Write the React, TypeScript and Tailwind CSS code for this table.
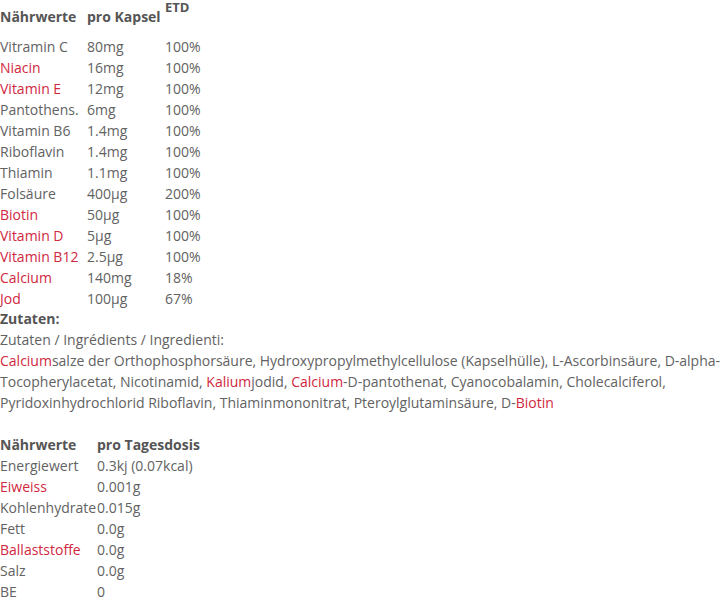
const red = 'text-[#d0283e]';

type Row = { name: string; amount: string; etd?: string; hl?: boolean };

const vitamine: Row[] = [
  { name: 'Vitramin C', amount: '80mg', etd: '100%' },
  { name: 'Niacin', amount: '16mg', etd: '100%', hl: true },
  { name: 'Vitamin E', amount: '12mg', etd: '100%', hl: true },
  { name: 'Pantothens.', amount: '6mg', etd: '100%' },
  { name: 'Vitamin B6', amount: '1.4mg', etd: '100%' },
  { name: 'Riboflavin', amount: '1.4mg', etd: '100%' },
  { name: 'Thiamin', amount: '1.1mg', etd: '100%' },
  { name: 'Folsäure', amount: '400µg', etd: '200%' },
  { name: 'Biotin', amount: '50µg', etd: '100%', hl: true },
  { name: 'Vitamin D', amount: '5µg', etd: '100%', hl: true },
  { name: 'Vitamin B12', amount: '2.5µg', etd: '100%', hl: true },
  { name: 'Calcium', amount: '140mg', etd: '18%', hl: true },
  { name: 'Jod', amount: '100µg', etd: '67%', hl: true },
];

const tagesdosis: Row[] = [
  { name: 'Energiewert', amount: '0.3kj (0.07kcal)' },
  { name: 'Eiweiss', amount: '0.001g', hl: true },
  { name: 'Kohlenhydrate', amount: '0.015g' },
  { name: 'Fett', amount: '0.0g' },
  { name: 'Ballaststoffe', amount: '0.0g', hl: true },
  { name: 'Salz', amount: '0.0g' },
  { name: 'BE', amount: '0' },
];

export default function App() {
  return (
    <div className="w-[720px] bg-white text-[14px] leading-[21px] text-[#626262] font-['Open_Sans',sans-serif]">
      {/* Vitamine pro Kapsel */}
      <div className="grid grid-cols-[87px_78px_1fr]">
        <div className="h-[36px] pt-[6px] font-bold text-[#555]">Nährwerte</div>
        <div className="h-[36px] pt-[6px] font-bold text-[#555]">pro Kapsel</div>
        <div className="h-[36px] text-[13px] leading-[14px] font-bold text-[#555]">ETD</div>
        {vitamine.map((r) => (
          <div key={r.name} className="contents">
            <div className={r.hl ? red : ''}>{r.name}</div>
            <div>{r.amount}</div>
            <div>{r.etd}</div>
          </div>
        ))}
      </div>

      <div className="-mt-px font-bold text-[#555]">Zutaten:</div>
      <p>Zutaten / Ingrédients / Ingredienti:</p>
      <p className="whitespace-nowrap">
        <span className={red}>Calcium</span>salze der Orthophosphorsäure, Hydroxypropylmethylcellulose (Kapselhülle), L-Ascorbinsäure, D-alpha-
        <br />
        Tocopherylacetat, Nicotinamid, <span className={red}>Kalium</span>jodid, <span className={red}>Calcium</span>-D-pantothenat, Cyanocobalamin, Cholecalciferol,
        <br />
        Pyridoxinhydrochlorid Riboflavin, Thiaminmononitrat, Pteroylglutaminsäure, D-<span className={red}>Biotin</span>
      </p>

      {/* Nährwerte pro Tagesdosis */}
      <div className="mt-[21px] grid grid-cols-[97px_1fr]">
        <div className="font-bold text-[#555]">Nährwerte</div>
        <div className="font-bold text-[#555]">pro Tagesdosis</div>
        {tagesdosis.map((r) => (
          <div key={r.name} className="contents">
            <div className={r.hl ? red : ''}>{r.name}</div>
            <div>{r.amount}</div>
          </div>
        ))}
      </div>
    </div>
  );
}
